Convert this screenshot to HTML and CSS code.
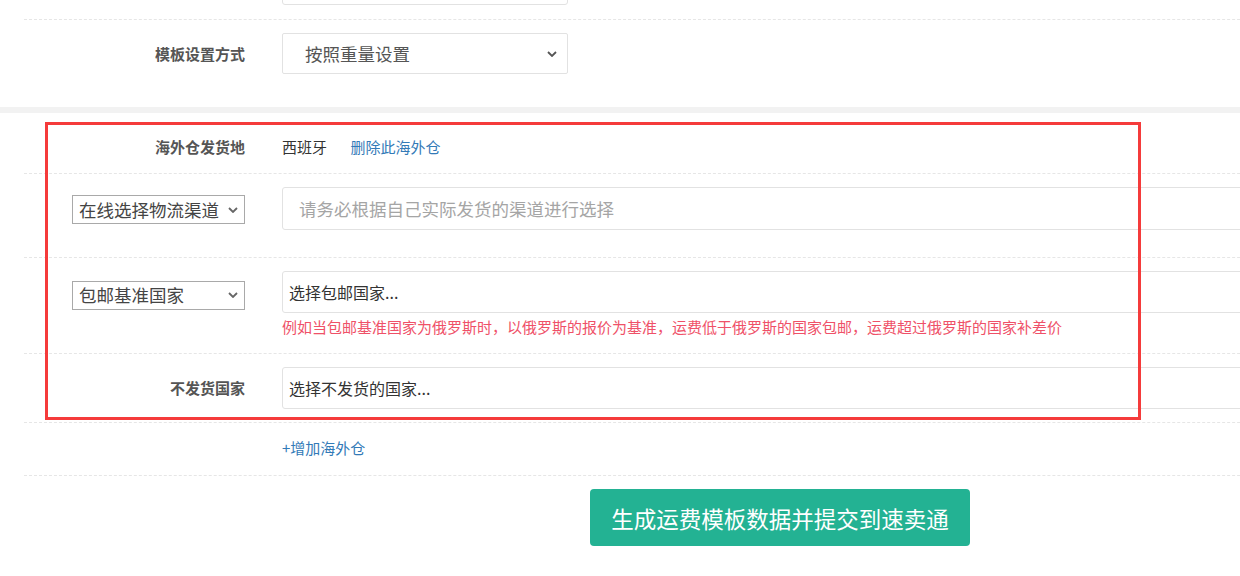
FILE: index.html
```html
<!DOCTYPE html>
<html lang="zh-CN">
<head>
    <meta charset="UTF-8">
    <title>运费模板设置</title>
    <link rel="stylesheet" href="styles.css">
</head>
<body>
    <div class="page">
        <div class="panel panel-top">
            <div class="row row-cut">
                <div class="label"></div>
                <div class="field"><div class="box box-short"></div></div>
            </div>
            <div class="row row-mode">
                <div class="label">模板设置方式</div>
                <div class="field">
                    <div class="box box-short fake-select big">
                        <span>按照重量设置</span>
                        <svg class="chev" viewBox="0 0 10 6"><path d="M1 1l4 4 4-4"/></svg>
                    </div>
                </div>
            </div>
        </div>

        <div class="panel panel-wh">
            <div class="row row-head">
                <div class="label">海外仓发货地</div>
                <div class="field">
                    <span class="country">西班牙</span>
                    <a class="link">删除此海外仓</a>
                </div>
            </div>
            <div class="row row-channel">
                <div class="label">
                    <div class="mini-select">
                        <span>在线选择物流渠道</span>
                        <svg class="chev" viewBox="0 0 10 6"><path d="M1 1l4 4 4-4"/></svg>
                    </div>
                </div>
                <div class="field">
                    <div class="box box-wide placeholder">请务必根据自己实际发货的渠道进行选择</div>
                </div>
            </div>
            <div class="row row-free">
                <div class="label">
                    <div class="mini-select">
                        <span>包邮基准国家</span>
                        <svg class="chev" viewBox="0 0 10 6"><path d="M1 1l4 4 4-4"/></svg>
                    </div>
                </div>
                <div class="field">
                    <div class="box box-wide chosen">选择包邮国家...</div>
                    <p class="help">例如当包邮基准国家为俄罗斯时，以俄罗斯的报价为基准，运费低于俄罗斯的国家包邮，运费超过俄罗斯的国家补差价</p>
                </div>
            </div>
            <div class="row row-block">
                <div class="label">不发货国家</div>
                <div class="field">
                    <div class="box box-wide chosen">选择不发货的国家...</div>
                </div>
            </div>
            <div class="row row-add">
                <div class="label"></div>
                <div class="field"><a class="link">+增加海外仓</a></div>
            </div>

            <div class="highlight"></div>
        </div>

        <div class="actions">
            <button class="submit">生成运费模板数据并提交到速卖通</button>
        </div>
    </div>
</body>
</html>
```
FILE: styles.css
```css
html, body {
    margin: 0;
    overflow: hidden;
    background: #fff;
}
body {
    font-family: "Noto Sans CJK SC", "Liberation Sans", sans-serif;
    font-size: 15px;
    color: #333;
}
.page {
    width: 1320px;
    margin-top: -51px;
}
.panel {
    padding-left: 24px;
}
.panel-top {
    padding-bottom: 32px;
}
.panel-wh {
    position: relative;
    border-top: 6px solid #f2f2f2;
    padding-top: 10px;
}
.row {
    display: flex;
    align-items: flex-start;
    border-bottom: 1px dashed #e6e6e6;
}
.row-mode {
    border-bottom: 0;
    padding-top: 13px;
}
.row-cut {
    padding: 14px 0;
}
.label {
    width: 221px;
    padding-right: 37px;
    flex-shrink: 0;
    display: flex;
    align-items: center;
    justify-content: flex-end;
    min-height: 42px;
    font-weight: bold;
    color: #555;
    line-height: 20px;
}
.field {
    flex: 1;
}
.box {
    box-sizing: border-box;
    height: 42px;
    border: 1px solid #e2e2e2;
    border-radius: 3px;
    background: #fff;
    display: flex;
    align-items: center;
}
.box-short {
    width: 286px;
}
.row-mode .box {
    height: 41px;
    border-radius: 2px;
}
.box-wide {
    width: 100%;
}
.fake-select {
    justify-content: space-between;
    padding: 0 10px 0 22px;
}
.big {
    font-size: 17.5px;
    color: #555;
}
.chev {
    width: 10px;
    height: 6px;
    fill: none;
    stroke: #555;
    stroke-width: 1.8;
}
.placeholder {
    padding-left: 16px;
    font-size: 17.5px;
    color: #a5a5a5;
}
.chosen {
    padding-left: 6px;
    font-size: 16px;
    color: #333;
}

.row-head {
    padding: 13px 0 16px;
}
.row-head .label,
.row-add .label {
    min-height: 21px;
}
.row-head .field,
.row-add .field {
    line-height: 21px;
}
.country {
    margin-right: 20px;
}
.link {
    color: #337ab7;
    text-decoration: none;
    cursor: pointer;
}

.row-channel {
    padding: 13px 0 26px;
}
.row-channel .box {
    height: 43px;
}
.row-channel .label {
    min-height: 43px;
    padding-top: 1px;
}
.row-free {
    padding: 13px 0 16px;
}
.row-free .label {
    padding-top: 6px;
    min-height: 36px;
}
.row-block {
    padding: 13px 0;
}
.row-add {
    padding: 14px 0 17px;
}

.mini-select {
    box-sizing: border-box;
    width: 173px;
    height: 29px;
    border: 1px solid #a9a9a9;
    display: flex;
    align-items: center;
    justify-content: space-between;
    padding: 0 6px;
    font-size: 17.5px;
    font-weight: normal;
    color: #444;
    background: #fff;
}
.mini-select .chev {
    stroke: #666;
}

.help {
    margin: 4px 0 0;
    line-height: 20px;
    color: #ef5168;
}

.highlight {
    position: absolute;
    left: 45px;
    top: 9px;
    width: 1090px;
    height: 292px;
    border: 3px solid #f53b3b;
}

.actions {
    padding: 13px 0 0 590px;
}
.submit {
    width: 380px;
    height: 57px;
    border: 0;
    border-radius: 4px;
    background: #23b293;
    color: #fff;
    font-family: inherit;
    font-size: 22.5px;
    cursor: pointer;
}
```
